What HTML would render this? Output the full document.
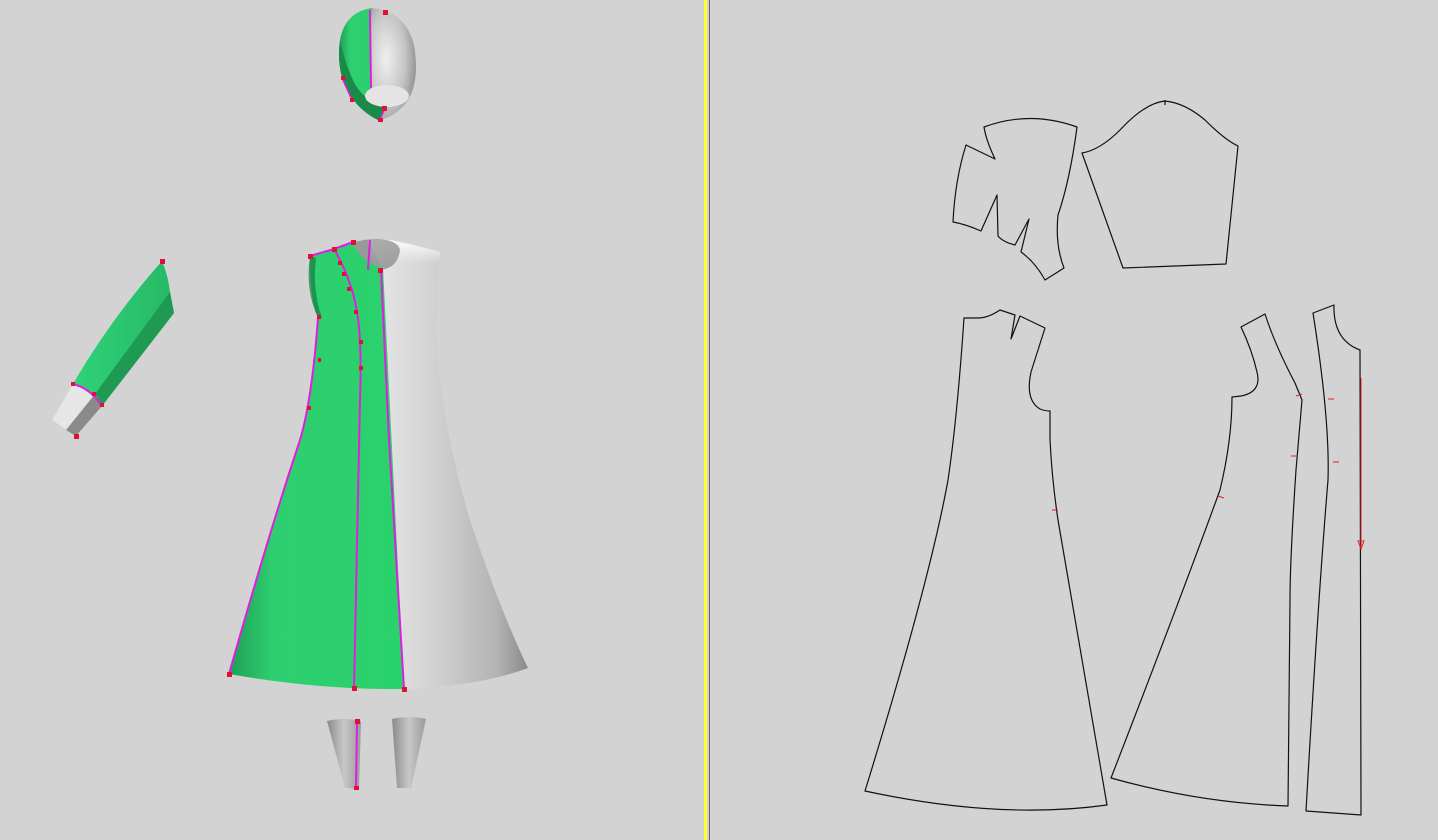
<!DOCTYPE html>
<html><head><meta charset="utf-8">
<style>
html,body{margin:0;padding:0;background:#d3d3d3;width:1438px;height:840px;overflow:hidden}
svg{display:block}
</style></head>
<body>
<svg width="1438" height="840" viewBox="0 0 1438 840" xmlns="http://www.w3.org/2000/svg">
<defs>
<linearGradient id="gw" x1="0" x2="1" y1="0" y2="0">
 <stop offset="0" stop-color="#e8e8e8"/><stop offset="0.35" stop-color="#d6d6d6"/><stop offset="0.8" stop-color="#b4b4b4"/><stop offset="1" stop-color="#8a8a8a"/>
</linearGradient>
<linearGradient id="gwt" x1="0" x2="0" y1="0" y2="1">
 <stop offset="0" stop-color="#ffffff" stop-opacity="0.9"/><stop offset="0.3" stop-color="#ffffff" stop-opacity="0"/>
</linearGradient>
<linearGradient id="gg" x1="0" x2="1" y1="0" y2="0">
 <stop offset="0" stop-color="#1f9e55"/><stop offset="0.25" stop-color="#2ecf70"/><stop offset="1" stop-color="#2ad26c"/>
</linearGradient>
<linearGradient id="gtube" x1="0" x2="1">
 <stop offset="0" stop-color="#8a8a8a"/><stop offset="0.5" stop-color="#c8c8c8"/><stop offset="1" stop-color="#9a9a9a"/>
</linearGradient>
<radialGradient id="ghood" cx="0.35" cy="0.45" r="0.7">
 <stop offset="0" stop-color="#f0f0f0"/><stop offset="0.6" stop-color="#c4c4c4"/><stop offset="1" stop-color="#8c8c8c"/>
</radialGradient>
<linearGradient id="gsl" x1="0" x2="1">
 <stop offset="0" stop-color="#2fd27a"/><stop offset="1" stop-color="#26b865"/>
</linearGradient>
</defs>

<!-- divider -->
<rect x="704" y="0" width="3" height="840" fill="#ffff33"/>
<rect x="709" y="0" width="1" height="840" fill="#666"/>

<!-- DRESS -->
<!-- white right part -->
<path d="M368,240 Q385,238 400,242 Q420,246 440,252 Q437,300 436,330 Q440,420 470,520 Q500,610 528,668 Q480,686 404,689 L383,270 Z" fill="url(#gw)"/>
<path d="M368,240 Q385,238 400,242 Q420,246 440,252 L438,320 L383,320 Z" fill="url(#gwt)"/>
<!-- neck hole shading -->
<path d="M355,242 Q365,239 378,239 Q398,240 400,250 Q398,268 380,270 Q362,268 355,255 Z" fill="#6a6a6a" opacity="0.55"/>
<!-- green part -->
<path d="M310,256 L334,249 L353,242 Q360,262 383,268 L404,689 Q320,690 229,674 Q270,530 300,440 Q310,400 318,330 L318,318 Q310,300 310,256 Z" fill="url(#gg)"/>
<path d="M310,256 Q305,290 318,318 L322,318 Q312,290 316,258 Z" fill="#167a3e" opacity="0.7"/>
<!-- seams -->
<g fill="none" stroke="#e01ee0" stroke-width="2">
<path d="M229,674 Q270,530 300,440 Q312,400 318,318"/>
<path d="M310,256 L334,249 L353,242"/>
<path d="M334,249 Q352,280 357,312 Q362,340 360,400 L354,689"/>
<path d="M370,240 L368,270"/>
<path d="M381,270 L389,440 L404,689"/>
</g>
<g fill="#e0103a">
<rect x="227" y="672" width="5" height="5"/><rect x="352" y="686" width="5" height="5"/><rect x="402" y="687" width="5" height="5"/>
<rect x="308" y="254" width="5" height="5"/><rect x="332" y="247" width="5" height="5"/><rect x="351" y="240" width="5" height="5"/>
<rect x="378" y="268" width="5" height="5"/><rect x="317" y="315" width="4" height="4"/><rect x="318" y="358" width="3" height="4"/>
<rect x="307" y="406" width="4" height="4"/><rect x="338" y="261" width="4" height="4"/><rect x="342" y="272" width="4" height="4"/>
<rect x="347" y="287" width="4" height="4"/><rect x="354" y="310" width="4" height="4"/><rect x="359" y="340" width="4" height="4"/><rect x="359" y="366" width="4" height="4"/>
</g>

<!-- HOOD -->
<path d="M370,8 Q405,10 414,45 Q420,80 408,100 Q395,118 378,120 L372,85 Z" fill="url(#ghood)"/>
<path d="M372,8 Q345,12 340,40 Q336,70 348,92 Q360,112 380,121 L384,108 Q368,100 365,95 L372,88 L370,20 Z" fill="url(#gg)"/>
<path d="M340,40 Q336,70 348,92 Q360,112 380,121 L384,108 Q360,98 352,78 Q344,60 340,40 Z" fill="#1a8a48"/>
<ellipse cx="387" cy="96" rx="22" ry="11" fill="#e4e4e4"/>
<path d="M370,10 L371,88" stroke="#e01ee0" stroke-width="2"/>
<path d="M342,78 L352,100" stroke="#e01ee0" stroke-width="1.5"/>
<path d="M385,108 L380,120" stroke="#e01ee0" stroke-width="1.5"/>
<g fill="#e0103a"><rect x="383" y="10" width="5" height="5"/><rect x="341" y="76" width="4" height="4"/><rect x="350" y="98" width="4" height="4"/><rect x="382" y="106" width="5" height="5"/><rect x="378" y="118" width="5" height="4"/></g>

<!-- SLEEVE -->
<path d="M162,261 Q168,275 170,292 L174,313 L102,406 L95,394 L73,384 Q110,320 162,261 Z" fill="url(#gsl)"/>
<path d="M170,292 L174,313 L102,406 L95,394 Z" fill="#1f9a52"/>
<path d="M73,384 L52,420 L76,436 L102,406 L95,394 Z" fill="#e6e6e6"/>
<path d="M95,394 L102,406 L76,436 L66,430 Z" fill="#8a8a8a"/>
<path d="M73,384 Q90,388 102,406" fill="none" stroke="#e01ee0" stroke-width="2"/>
<g fill="#e0103a"><rect x="160" y="259" width="5" height="5"/><rect x="71" y="382" width="4" height="4"/><rect x="92" y="392" width="4" height="4"/><rect x="100" y="403" width="4" height="4"/><rect x="74" y="434" width="5" height="5"/></g>

<!-- LEGS -->
<path d="M327,721 Q344,717 361,721 L359,789 L345,788 Z" fill="url(#gtube)"/>
<path d="M392,719 Q409,715 426,719 L411,788 L397,788 Z" fill="url(#gtube)"/>
<path d="M357,722 L356,789" stroke="#e01ee0" stroke-width="2"/>
<g fill="#e0103a"><rect x="355" y="719" width="5" height="5"/><rect x="354" y="786" width="5" height="4"/></g>

<!-- PATTERN PIECES -->
<g fill="none" stroke="#111" stroke-width="1.2" stroke-linejoin="round">
<path d="M984,127 Q1030,110 1077,127 Q1070,180 1058,215 Q1055,245 1064,268 L1045,280 Q1035,262 1021,252 L1029,219 L1015,245 Q1003,242 998,236 L997,195 L981,231 Q965,224 953,222 Q955,180 966,145 L995,159 Q986,140 984,127 Z"/>
<path d="M1082,153 Q1100,150 1120,130 Q1145,103 1165,101 Q1185,103 1205,120 Q1225,140 1238,146 L1226,264 L1123,268 Z"/>
<path d="M1165,100 L1165,105"/>
<path d="M964,318 L978,318 Q988,318 1000,310 L1015,315 L1011,339 L1020,316 L1045,328 L1031,372 Q1025,400 1040,409 Q1045,411 1050,411 L1050,440 Q1052,480 1058,520 L1107,805 Q1000,820 865,791 Q930,580 948,480 Q957,420 964,318 Z"/>
<path d="M1241,327 L1265,314 Q1275,345 1295,383 Q1302,400 1302,400 L1296,470 Q1290,560 1290,600 L1288,806 Q1200,803 1111,778 Q1180,600 1220,490 Q1232,440 1232,397 L1241,396 Q1262,392 1257,372 Q1252,350 1241,327 Z"/>
<path d="M1313,313 L1334,305 Q1333,340 1360,350 L1361,815 L1306,811 Q1318,600 1328,480 Q1330,420 1313,313 Z"/>
</g>
<g stroke="#e02020" stroke-width="1" fill="none">
<path d="M1052,510 L1058,510"/>
<path d="M1296,396 L1302,394"/><path d="M1291,456 L1297,456"/><path d="M1328,399 L1334,399"/><path d="M1333,462 L1339,462"/><path d="M1218,496 L1224,498"/>
<path d="M1361,378 L1361,548"/>
<path d="M1358,541 L1361,549 L1364,541 Z"/>
</g>
</svg>
</body></html>
